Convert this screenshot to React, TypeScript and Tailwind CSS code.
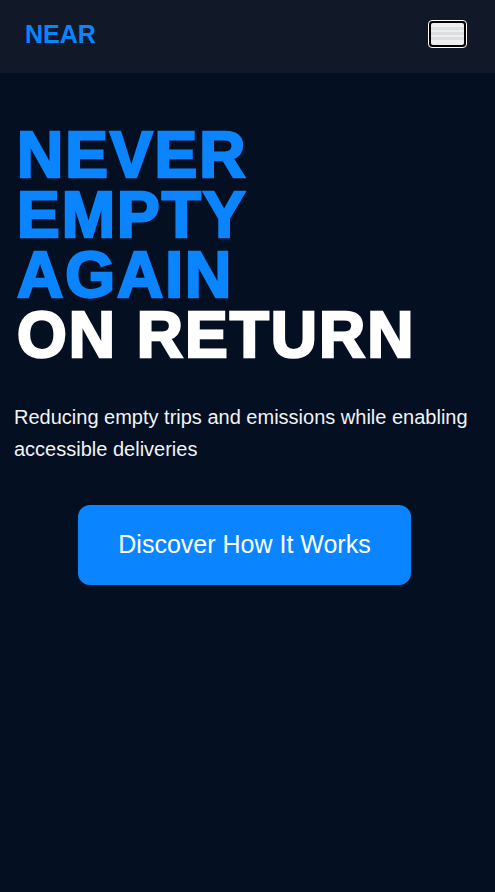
import React from "react";

export default function App() {
  return (
    <div
      className="min-h-[892px] bg-[#050f22] text-white"
      style={{ fontFamily: '"Liberation Sans", Arial, sans-serif' }}
    >
      <header className="h-[73px] bg-[#111827] flex items-center justify-between pl-[25px] pr-[28px]">
        <div className="text-[25px] font-bold text-[#0a84ff] leading-none mt-[-4px]">NEAR</div>
        <button
          aria-label="Menu"
          className="w-[39px] h-[28px] rounded-[4px] border border-white bg-black p-[2px] mt-[-6px]"
        >
          <div className="h-full w-full rounded-[2px] bg-[#eceef1] flex flex-col justify-center gap-[2px]">
            <span className="block h-[3px] bg-[#dedede]" />
            <span className="block h-[3px] bg-[#dedede]" />
            <span className="block h-[3px] bg-[#dedede]" />
          </div>
        </button>
      </header>

      <section className="pl-[14px] pr-[20px] pt-[52px]">
        {/* heavy display weight: stroke thickens the bold face */}
        <h1 className="ml-[3px] text-[64px] font-bold leading-[60px] tracking-[2px] [-webkit-text-stroke-width:2.5px]">
          <span className="block text-[#0a84ff]">NEVER</span>
          <span className="block text-[#0a84ff]">EMPTY</span>
          <span className="block text-[#0a84ff]">AGAIN</span>
          <span className="block text-white">ON RETURN</span>
        </h1>

        <p className="mt-[36px] text-[20px] leading-[32px] text-[#f1f3f6]">
          Reducing empty trips and emissions while enabling accessible deliveries
        </p>

        <div className="mt-[40px] flex justify-center">
          <button className="w-[333px] h-[80px] rounded-[12px] bg-[#0a84ff] text-white text-[25px]">
            Discover How It Works
          </button>
        </div>
      </section>
    </div>
  );
}
